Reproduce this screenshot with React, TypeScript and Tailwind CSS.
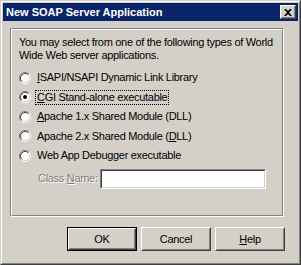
import React from "react"

const font = { fontFamily: '"Liberation Sans", Arial, sans-serif' }

function Radio({ checked }: { checked?: boolean }) {
  return (
    <svg width="12" height="12" viewBox="0 0 12 12" className="shrink-0">
      <circle cx="6" cy="6" r="5" fill="#ffffff" />
      <path d="M2.11 9.89 A5.5 5.5 0 0 1 9.89 2.11" fill="none" stroke="#808080" strokeWidth="1" />
      <path d="M9.89 2.11 A5.5 5.5 0 0 1 2.11 9.89" fill="none" stroke="#ffffff" strokeWidth="1" />
      <path d="M2.82 9.18 A4.5 4.5 0 0 1 9.18 2.82" fill="none" stroke="#404040" strokeWidth="1" />
      <path d="M9.18 2.82 A4.5 4.5 0 0 1 2.82 9.18" fill="none" stroke="#d4d0c8" strokeWidth="1" />
      {checked && <circle cx="6" cy="6" r="2" fill="#000000" />}
    </svg>
  )
}

function Option({ label, checked, focus }: { label: React.ReactNode; checked?: boolean; focus?: boolean }) {
  return (
    <div className="flex items-center h-[19.5px]">
      <Radio checked={checked} />
      <span
        className={`ml-[4px] px-[1px] leading-[13px] whitespace-nowrap border border-dotted ${focus ? "border-black" : "border-transparent"}`}
      >
        {label}
      </span>
    </div>
  )
}

function Button({ children, isDefault }: { children: React.ReactNode; isDefault?: boolean }) {
  return (
    <div className={`w-[70px] h-[24px] ${isDefault ? "border border-black" : ""}`}>
      <div className="h-full border border-t-white border-l-white border-r-[#404040] border-b-[#404040]">
        <div className="h-full flex items-center justify-center border border-t-[#d4d0c8] border-l-[#d4d0c8] border-r-[#808080] border-b-[#808080]">
          {children}
        </div>
      </div>
    </div>
  )
}

export default function App() {
  return (
    <div style={font} className="w-[301px] h-[265px] text-[11px] tracking-[-0.3px] text-black select-none">
      <div className="w-full h-full border border-t-[#d4d0c8] border-l-[#d4d0c8] border-r-[#404040] border-b-[#404040]">
        <div className="w-full h-full border border-t-white border-l-white border-r-[#808080] border-b-[#808080] bg-[#d4d0c8] p-[1px] flex flex-col">
          {/* title bar */}
          <div className="h-[18px] bg-[#0a246a] flex items-center justify-between pl-[3px] pr-[2px]">
            <span className="text-white font-bold text-[11px] leading-[13px] tracking-normal">New SOAP Server Application</span>
            <div className="w-[16px] h-[14px] border border-t-white border-l-white border-r-[#404040] border-b-[#404040]">
              <div className="w-full h-full bg-[#d4d0c8] border border-t-[#d4d0c8] border-l-[#d4d0c8] border-r-[#808080] border-b-[#808080] flex items-center justify-center">
                <svg width="8" height="7" viewBox="0 0 8 7">
                  <path d="M0 0h2l2 2 2-2h2L5 3.5 8 7H6L4 5 2 7H0l3-3.5z" fill="#000" />
                </svg>
              </div>
            </div>
          </div>

          {/* group box */}
          <div className="ml-[7px] mt-[7px] w-[274px] h-[189px] border border-[#808080] border-r-white border-b-white">
            <div className="h-full border border-white border-r-[#808080] border-b-[#808080] pl-[7px] pt-[6px] flex flex-col">
              <p className="leading-[13px] w-[256px]">
                You may select from one of the following types of World Wide Web server applications.
              </p>
              <div className="mt-[6px] flex flex-col">
                <Option label={<><u>I</u>SAPI/NSAPI Dynamic Link Library</>} />
                <Option label={<><u>C</u>GI Stand-alone executable</>} checked focus />
                <Option label={<><u>A</u>pache 1.x Shared Module (DLL)</>} />
                <Option label={<>Apache 2.x Shared Module (<u>D</u>LL)</>} />
                <Option label={<>Web App Debugger executable</>} />
              </div>
              <div className="mt-[3px] flex items-center">
                <span className="ml-[19px] w-[62px] whitespace-nowrap text-[#808080] [text-shadow:1px_1px_0_#ffffff]">
                  Class <u>N</u>ame:
                </span>
                <div className="w-[166px] h-[20px] border border-t-[#808080] border-l-[#808080] border-r-white border-b-white">
                  <div className="w-full h-full bg-white border border-t-[#404040] border-l-[#404040] border-r-[#d4d0c8] border-b-[#d4d0c8]" />
                </div>
              </div>
            </div>
          </div>

          {/* buttons */}
          <div className="mt-[10px] ml-[64px] flex gap-[4px]">
            <Button isDefault>OK</Button>
            <Button>Cancel</Button>
            <Button>
              <span><u>H</u>elp</span>
            </Button>
          </div>
        </div>
      </div>
    </div>
  )
}
